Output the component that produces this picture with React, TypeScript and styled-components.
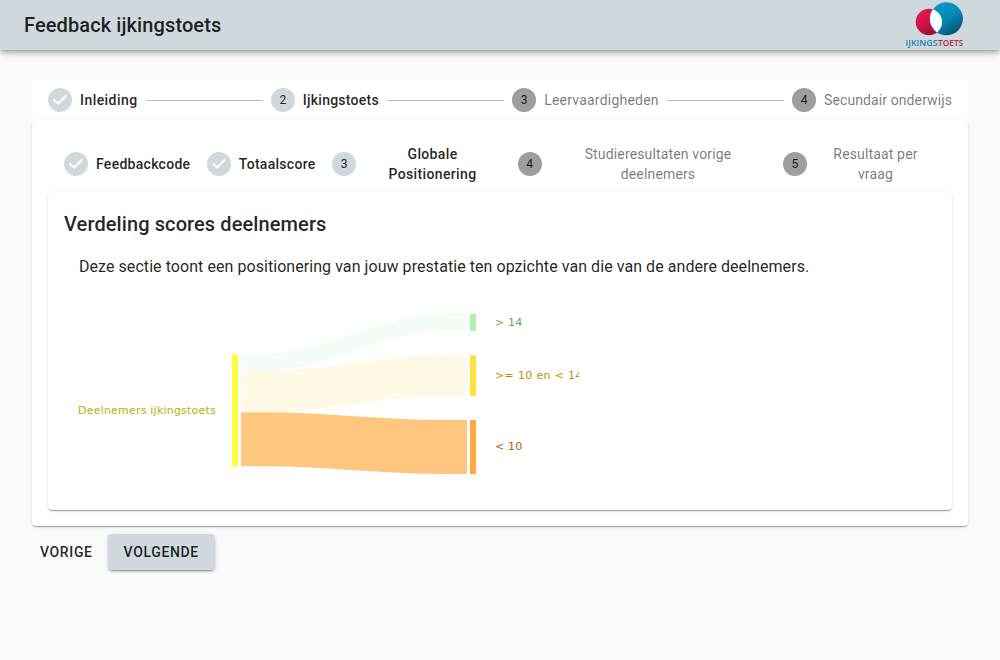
import React from "react";
import styled, { createGlobalStyle, css } from "styled-components";

const GlobalStyle = createGlobalStyle`
  *, *::before, *::after { box-sizing: border-box; }
  body {
    margin: 0;
    background: #fafafa;
    color: rgba(0, 0, 0, 0.87);
    font-family: Roboto, "Liberation Sans", sans-serif;
    font-size: 14px;
    line-height: 20px;
    letter-spacing: 0.01071em;
  }
`;

const AppBar = styled.header`
  display: flex;
  align-items: center;
  justify-content: space-between;
  height: 50px;
  padding: 0 36px 0 24px;
  background: #cfd8dd;
  box-shadow: 0 2px 4px -1px rgba(0, 0, 0, 0.2), 0 4px 5px 0 rgba(0, 0, 0, 0.14),
    0 1px 10px 0 rgba(0, 0, 0, 0.12);
`;

const Title = styled.h1`
  margin: 0;
  font-size: 20px;
  font-weight: 500;
  line-height: 32px;
  letter-spacing: 0.1px;
`;

const LogoImage = styled.svg`
  display: block;
  width: 60px;
  height: 48px;
`;

const Main = styled.main`
  padding: 30px 32px;
`;

const Stepper = styled.div<{ $nested?: boolean }>`
  display: flex;
  align-items: center;
  justify-content: space-between;
  background: #fff;
  height: ${(p) => (p.$nested ? "56px" : "40px")};
  padding: 0 16px;
`;

const Step = styled.div`
  display: flex;
  align-items: center;
  gap: 8px;
`;

const StepIcon = styled.span<{ $active: boolean }>`
  display: flex;
  flex: none;
  align-items: center;
  justify-content: center;
  width: 24px;
  height: 24px;
  border-radius: 50%;
  background: ${(p) => (p.$active ? "#cfd8dd" : "#9e9e9e")};
  font-size: 12px;
  letter-spacing: 0;
`;

const StepLabel = styled.span<{ $active: boolean; $width?: number; $spacing?: number }>`
  text-align: center;
  ${(p) =>
    p.$width &&
    css`
      width: ${p.$width}px;
      padding: 0 ${p.$width < 130 ? 16 : 20}px;
    `}
  color: ${(p) => (p.$active ? "rgba(0, 0, 0, 0.87)" : "rgba(0, 0, 0, 0.54)")};
  font-weight: ${(p) => (p.$active ? 500 : 400)};
  letter-spacing: ${(p) => p.$spacing ?? 0.15}px;
`;

const Connector = styled.span`
  flex: 1;
  height: 1px;
  margin: 0 8px;
  background: #bdbdbd;
`;

const Paper = styled.section<{ $height: number; $pad: string }>`
  height: ${(p) => p.$height}px;
  padding: ${(p) => p.$pad};
  border-radius: 4px;
  background: #fff;
  box-shadow: 0 2px 1px -1px rgba(0, 0, 0, 0.2), 0 1px 1px 0 rgba(0, 0, 0, 0.14),
    0 1px 3px 0 rgba(0, 0, 0, 0.12);
`;

const Intro = styled.p`
  margin: 15px 15px 20px;
  font-size: 16px;
  line-height: 24px;
  letter-spacing: 0.06px;
`;

const Chart = styled.svg`
  display: block;
  width: 515px;
  height: 190px;
  overflow: hidden;
  font-family: "DejaVu Sans", sans-serif;
  font-size: 11px;
`;

const Actions = styled.div`
  display: flex;
  gap: 7px;
  padding-top: 8px;
`;

const Button = styled.button<{ $raised?: boolean }>`
  height: 36px;
  padding: ${(p) => (p.$raised ? "6px 16px" : "6px 8px")};
  border: 0;
  border-radius: 4px;
  background: ${(p) => (p.$raised ? "#cfd8dd" : "transparent")};
  color: rgba(0, 0, 0, 0.87);
  font: 500 14px/24px Roboto, "Liberation Sans", sans-serif;
  letter-spacing: 0.63px;
  text-transform: uppercase;
  ${(p) =>
    p.$raised &&
    css`
      box-shadow: 0 3px 1px -2px rgba(0, 0, 0, 0.2), 0 2px 2px 0 rgba(0, 0, 0, 0.14),
        0 1px 5px 0 rgba(0, 0, 0, 0.12);
    `}
`;

type StepData = {
  label: string;
  done?: boolean;
  active?: boolean;
  width?: number;
  spacing?: number;
};

const outerSteps: StepData[] = [
  { label: "Inleiding", done: true, active: true, spacing: 0.44 },
  { label: "Ijkingstoets", active: true, spacing: 0.25 },
  { label: "Leervaardigheden", spacing: 0.22 },
  { label: "Secundair onderwijs", spacing: 0.1 },
];

const innerSteps: StepData[] = [
  { label: "Feedbackcode", done: true, active: true, spacing: 0.28 },
  { label: "Totaalscore", done: true, active: true, spacing: 0.28 },
  { label: "Globale Positionering", active: true, width: 137, spacing: 0.36 },
  { label: "Studieresultaten vorige deelnemers", width: 217 },
  { label: "Resultaat per vraag", width: 121 },
];

function Steps({ items, nested }: { items: StepData[]; nested?: boolean }) {
  return (
    <Stepper $nested={nested}>
      {items.map((s, i) => (
        <React.Fragment key={s.label}>
          {i > 0 && !nested && <Connector />}
          <Step>
            <StepIcon $active={!!s.active}>
              {s.done ? (
                <svg width="24" height="24" viewBox="0 0 24 24">
                  <path d="M10 17l-5-5 1.4-1.4 3.6 3.6 7.6-7.6L19 8l-9 9z" fill="#fff" />
                </svg>
              ) : (
                i + 1
              )}
            </StepIcon>
            <StepLabel $active={!!s.active} $width={s.width} $spacing={s.spacing}>
              {s.label}
            </StepLabel>
          </Step>
        </React.Fragment>
      ))}
    </Stepper>
  );
}

function Logo() {
  return (
    <LogoImage viewBox="0 0 60 48" role="img" aria-label="Ijkingstoets">
      <defs>
        <linearGradient id="red" x1="0" y1="0" x2="0.7" y2="1">
          <stop offset="0" stopColor="#e8194f" />
          <stop offset="0.5" stopColor="#d5144a" />
          <stop offset="1" stopColor="#8f1230" />
        </linearGradient>
        <linearGradient id="blue" x1="0.2" y1="0" x2="0.8" y2="1">
          <stop offset="0" stopColor="#0698c8" />
          <stop offset="0.5" stopColor="#0788b4" />
          <stop offset="1" stopColor="#04506c" />
        </linearGradient>
        <clipPath id="disc">
          <circle cx="24.9" cy="21" r="13.2" />
        </clipPath>
      </defs>
      <circle cx="24.9" cy="21" r="13.2" fill="url(#red)" />
      <circle cx="42.4" cy="17.8" r="16.5" fill="url(#blue)" />
      <circle cx="42.4" cy="17.8" r="16.5" fill="#fff" clipPath="url(#disc)" />
      <g fontFamily="Open Sans" fontSize="9" fontWeight="600" letterSpacing="0">
        <text x="1.6" y="44.7" textLength="32" lengthAdjust="spacingAndGlyphs" fill="#1687ad">
          IJKINGS
        </text>
        <text x="34" y="44.7" textLength="25.2" lengthAdjust="spacingAndGlyphs" fill="#b72a50">
          TOETS
        </text>
      </g>
    </LogoImage>
  );
}

function ScoreFlow() {
  return (
    <Chart viewBox="0 0 515 190">
      <path
        d="M177 55H201C260 55 320 14.5 379 14.5H403V31H379C320 31 260 72 201 72H177Z"
        fill="#f4fdf5"
      />
      <path
        d="M177 72H201C260 72 320 56 379 56H403V96.7H379C320 96.7 260 113.2 201 113.2H177Z"
        fill="#fff9e5"
      />
      <path
        d="M177 113.2H201C260 113.2 320 121 379 121H403V175H379C320 175 260 167.2 201 167.2H177Z"
        fill="#ffc680"
      />
      <rect x="168" y="55.3" width="6" height="112.1" fill="#ffff40" />
      <rect x="406" y="15" width="6" height="17" fill="#aef2ae" />
      <rect x="406" y="56.3" width="6" height="40.7" fill="#ffe140" />
      <rect x="406" y="121" width="6" height="54" fill="#ffa940" />
      <text x="14" y="115" letterSpacing="0.21" fill="#b3b300">
        Deelnemers ijkingstoets
      </text>
      <text x="431" y="27" fill="#67a667">&gt; 14</text>
      <text x="431" y="80" letterSpacing="0.33" fill="#b39600">
        &gt;= 10 en &lt; 14
      </text>
      <text x="431" y="151" fill="#b36200">&lt; 10</text>
    </Chart>
  );
}

export default function App() {
  return (
    <>
      <GlobalStyle />
      <AppBar>
        <Title>Feedback ijkingstoets</Title>
        <Logo />
      </AppBar>
      <Main>
        <Steps items={outerSteps} />
        <Paper $height={406} $pad="16px">
          <Steps items={innerSteps} nested />
          <Paper $height={318} $pad="16px">
            <Title as="h2">Verdeling scores deelnemers</Title>
            <Intro>
              Deze sectie toont een positionering van jouw prestatie ten opzichte van die van de andere
              deelnemers.
            </Intro>
            <ScoreFlow />
          </Paper>
        </Paper>
        <Actions>
          <Button>Vorige</Button>
          <Button $raised>Volgende</Button>
        </Actions>
      </Main>
    </>
  );
}
